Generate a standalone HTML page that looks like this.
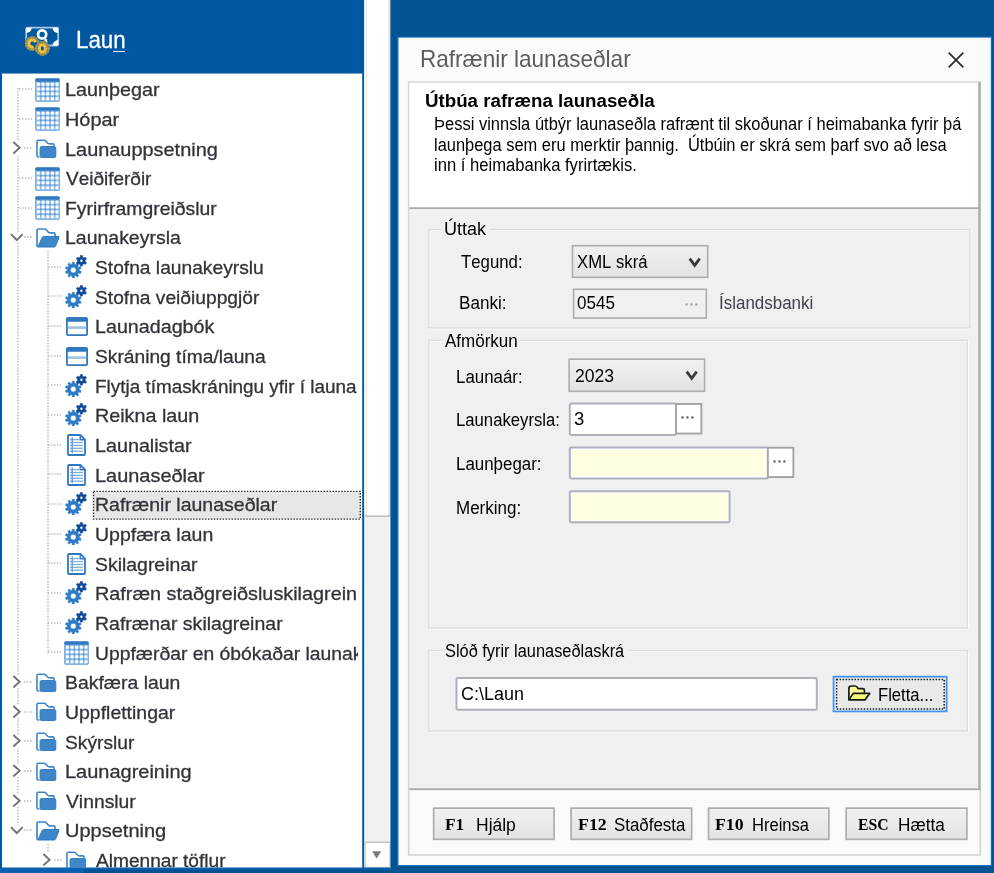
<!DOCTYPE html>
<html lang="is"><head><meta charset="utf-8"><title>Rafrænir launaseðlar</title>
<style>
html,body{margin:0;padding:0}
body{width:994px;height:873px;position:relative;overflow:hidden;background:#fff;font-family:"Liberation Sans",sans-serif;font-kerning:none}
div,span.t,svg.i{position:absolute}
span.t{white-space:pre;transform-origin:0 50%}
span.b{-webkit-text-stroke:0.3px currentColor}
span.t,svg.k{filter:blur(0.4px)}
</style></head>
<body>

<svg width="0" height="0" style="position:absolute">
<defs>
<symbol id="i-grid" viewBox="0 0 25 24">
 <rect x="0.4" y="0.4" width="24.2" height="23.2" rx="1.8" fill="#8dbae6" stroke="#6aa4dc" stroke-width="0.8"/>
 <rect x="0.4" y="0.4" width="24.2" height="3.3" rx="1.4" fill="#2f78bf"/>
 <g fill="#5793d3"><rect x="4.93" y="3.05" width="1.6" height="1.6"/><rect x="9.58" y="3.05" width="1.6" height="1.6"/><rect x="14.23" y="3.05" width="1.6" height="1.6"/><rect x="18.88" y="3.05" width="1.6" height="1.6"/><rect x="4.93" y="7.85" width="1.6" height="1.6"/><rect x="9.58" y="7.85" width="1.6" height="1.6"/><rect x="14.23" y="7.85" width="1.6" height="1.6"/><rect x="18.88" y="7.85" width="1.6" height="1.6"/><rect x="4.93" y="12.65" width="1.6" height="1.6"/><rect x="9.58" y="12.65" width="1.6" height="1.6"/><rect x="14.23" y="12.65" width="1.6" height="1.6"/><rect x="18.88" y="12.65" width="1.6" height="1.6"/><rect x="4.93" y="17.45" width="1.6" height="1.6"/><rect x="9.58" y="17.45" width="1.6" height="1.6"/><rect x="14.23" y="17.45" width="1.6" height="1.6"/><rect x="18.88" y="17.45" width="1.6" height="1.6"/></g>
 <g fill="#fff"><rect x="1.90" y="4.75" width="3" height="3" rx="0.7"/><rect x="6.55" y="4.75" width="3" height="3" rx="0.7"/><rect x="11.20" y="4.75" width="3" height="3" rx="0.7"/><rect x="15.85" y="4.75" width="3" height="3" rx="0.7"/><rect x="20.50" y="4.75" width="3" height="3" rx="0.7"/><rect x="1.90" y="9.55" width="3" height="3" rx="0.7"/><rect x="6.55" y="9.55" width="3" height="3" rx="0.7"/><rect x="11.20" y="9.55" width="3" height="3" rx="0.7"/><rect x="15.85" y="9.55" width="3" height="3" rx="0.7"/><rect x="20.50" y="9.55" width="3" height="3" rx="0.7"/><rect x="1.90" y="14.35" width="3" height="3" rx="0.7"/><rect x="6.55" y="14.35" width="3" height="3" rx="0.7"/><rect x="11.20" y="14.35" width="3" height="3" rx="0.7"/><rect x="15.85" y="14.35" width="3" height="3" rx="0.7"/><rect x="20.50" y="14.35" width="3" height="3" rx="0.7"/><rect x="1.90" y="19.15" width="3" height="3" rx="0.7"/><rect x="6.55" y="19.15" width="3" height="3" rx="0.7"/><rect x="11.20" y="19.15" width="3" height="3" rx="0.7"/><rect x="15.85" y="19.15" width="3" height="3" rx="0.7"/><rect x="20.50" y="19.15" width="3" height="3" rx="0.7"/></g>
</symbol>
<symbol id="i-folder" viewBox="0 0 22 20">
 <path d="M3.6 18.6 H2.4 Q1 18.6 1 17.2 V2.4 Q1 1 2.4 1 H8.6 Q9.6 1 10.3 1.8 L12.4 4.2 Q13 4.8 14 4.8 H17.8 Q19 4.8 19 6 V7.2" fill="none" stroke="#3d87cc" stroke-width="1.7" stroke-linejoin="round"/>
 <rect x="4.3" y="7.6" width="16.6" height="11.6" rx="1.6" fill="#3f86c8" stroke="#2d79c2" stroke-width="1"/>
</symbol>
<symbol id="i-ofolder" viewBox="0 0 24 20">
 <path d="M2.6 18.8 Q1 18.8 1 17.2 V2.4 Q1 1 2.4 1 H8.6 Q9.6 1 10.3 1.8 L12.4 4.2 Q13 4.8 14 4.8 H17.8 Q19 4.8 19 6 V8" fill="none" stroke="#3d87cc" stroke-width="1.7" stroke-linejoin="round"/>
 <path d="M7.6 8.4 H22 Q23.4 8.4 22.9 9.8 L19.6 18 Q19.2 19 18 19 H3 Q1.8 19 2.4 17.8 L6.2 9.4 Q6.6 8.4 7.6 8.4 Z" fill="#3f86c8" stroke="#2d79c2" stroke-width="1" stroke-linejoin="round"/>
</symbol>
<symbol id="i-win" viewBox="0 0 22 19">
 <rect x="0.9" y="0.9" width="20.2" height="17.2" rx="1.2" fill="#fff" stroke="#2f78bf" stroke-width="1.8"/>
 <rect x="0.9" y="0.9" width="20.2" height="3.8" rx="1" fill="#2f78bf"/>
 <rect x="1.8" y="9.3" width="18.4" height="2.6" fill="#9cc2e6"/>
</symbol>
<symbol id="i-doc" viewBox="0 0 19 22">
 <path d="M1 2 Q1 1 2 1 H13.4 L18 5.6 V20 Q18 21 17 21 H2 Q1 21 1 20 Z" fill="#fff" stroke="#2f78bf" stroke-width="1.8" stroke-linejoin="round"/>
 <path d="M13.2 1.4 V5.8 H17.6" fill="none" stroke="#2f78bf" stroke-width="1.4"/>
 <g stroke="#7eaedd" stroke-width="1.3">
  <path d="M3 5.6 H12"/><path d="M3 8.5 H16"/><path d="M3 11.4 H16"/><path d="M3 14.3 H16"/><path d="M3 17.2 H16"/>
 </g>
 <path d="M5.2 3.2 V19" stroke="#5b97d3" stroke-width="1.3"/>
</symbol>
<symbol id="i-gears" viewBox="0 0 24 24"><path fill-rule="evenodd" fill="#2d7bc6" stroke="#2d7bc6" stroke-width="0.6" stroke-linejoin="round" d="M8.18 10.21 L8.31 8.16 L10.29 8.16 L10.42 10.21 L11.85 10.67 L13.16 9.09 L14.77 10.26 L13.67 11.99 L14.56 13.21 L16.54 12.70 L17.16 14.59 L15.25 15.35 L15.25 16.85 L17.16 17.61 L16.54 19.50 L14.56 18.99 L13.67 20.21 L14.77 21.94 L13.16 23.11 L11.85 21.53 L10.42 21.99 L10.29 24.04 L8.31 24.04 L8.18 21.99 L6.75 21.53 L5.44 23.11 L3.83 21.94 L4.93 20.21 L4.04 18.99 L2.06 19.50 L1.44 17.61 L3.35 16.85 L3.35 15.35 L1.44 14.59 L2.06 12.70 L4.04 13.21 L4.93 11.99 L3.83 10.26 L5.44 9.09 L6.75 10.67 Z M12.20 16.10 A2.9 2.9 0 1 0 6.40 16.10 A2.9 2.9 0 1 0 12.20 16.10 Z"/><path fill-rule="evenodd" fill="#0d4a98" stroke="#0d4a98" stroke-width="0.6" stroke-linejoin="round" d="M16.19 3.20 L16.44 1.49 L18.36 1.49 L18.61 3.20 L19.91 3.95 L21.52 3.31 L22.48 4.97 L21.13 6.05 L21.13 7.55 L22.48 8.63 L21.52 10.29 L19.91 9.65 L18.61 10.40 L18.36 12.11 L16.44 12.11 L16.19 10.40 L14.89 9.65 L13.28 10.29 L12.32 8.63 L13.67 7.55 L13.67 6.05 L12.32 4.97 L13.28 3.31 L14.89 3.95 Z M18.90 6.80 A1.5 1.5 0 1 0 15.90 6.80 A1.5 1.5 0 1 0 18.90 6.80 Z"/></symbol>
<symbol id="i-chev-r" viewBox="0 0 10 14">
 <path d="M1.4 1 L8 7 L1.4 13" fill="none" stroke="#727272" stroke-width="2"/>
</symbol>
<symbol id="i-chev-d" viewBox="0 0 14 9">
 <path d="M1 1.2 L7 7.4 L13 1.2" fill="none" stroke="#727272" stroke-width="2"/>
</symbol>
</defs>
</svg>

<svg class="i" style="left:0;top:0" width="994" height="873" viewBox="0 0 994 873"><defs><linearGradient id="gb" x1="0" y1="0" x2="0" y2="1"><stop offset="0" stop-color="#f1f1f1"/><stop offset="1" stop-color="#e3e3e3"/></linearGradient></defs><rect x="0.00" y="0.00" width="364.50" height="73.60" fill="#0058a0"/><rect x="0.00" y="73.20" width="364.40" height="799.80" fill="#0058a0"/><rect x="2.00" y="73.60" width="360.20" height="794.10" fill="#fff"/><rect x="364.60" y="0.00" width="25.80" height="867.70" fill="#fff"/><rect x="365.60" y="516.00" width="23.70" height="326.20" fill="#f0f0f0"/><rect x="365.65" y="-2.25" width="23.90" height="518.50" fill="#fff" stroke="#bdbdbd" stroke-width="1.5" rx="1.8"/><rect x="364.40" y="-3.00" width="1.60" height="517.50" fill="#fff"/><rect x="389.40" y="-3.00" width="1.10" height="517.50" fill="#f3efec"/><rect x="365.45" y="842.25" width="24.30" height="25.10" fill="#fff" stroke="#d9d2cc" stroke-width="1.1"/><rect x="364.60" y="841.60" width="25.80" height="1.30" fill="#c4c4c4"/><rect x="364.40" y="867.70" width="26.00" height="5.30" fill="#0058a0"/><rect x="0.00" y="867.70" width="390.40" height="5.30" fill="#0a5fae"/><rect x="84.60" y="869.40" width="305.80" height="3.60" fill="#04518f"/><path d="M372.1 851.2 H381.2 L376.65 858.4 Z" fill="#7a7a7a"/><rect x="390.40" y="0.00" width="603.60" height="873.00" fill="#045494"/><rect x="397.30" y="36.60" width="594.50" height="829.40" fill="#2b7ed0" opacity="0.75"/><rect x="398.50" y="37.70" width="592.30" height="827.30" fill="#fbfbfb"/><rect x="408.75" y="82.05" width="571.50" height="772.90" fill="#fafafa" stroke="#d6d6d6" stroke-width="1.7"/><rect x="409.60" y="82.80" width="568.80" height="705.60" fill="#f0f0f0"/><rect x="409.60" y="82.80" width="568.80" height="124.50" fill="#fff"/><rect x="978.30" y="82.00" width="2.10" height="708.40" fill="#a9a9a9"/><rect x="409.40" y="207.30" width="569.60" height="2.10" fill="#a9a9a9"/><rect x="409.60" y="209.40" width="568.70" height="1.30" fill="#fbfbfb"/><rect x="409.40" y="788.30" width="571.00" height="2.10" fill="#a9a9a9"/><rect x="409.60" y="790.40" width="570.00" height="1.20" fill="#fff"/><rect x="429.80" y="230.60" width="541.40" height="98.40" fill="none" stroke="#fbfbfb" stroke-width="1.2"/><rect x="428.75" y="229.55" width="541.30" height="98.30" fill="none" stroke="#dcdcdc" stroke-width="1.3"/><rect x="429.80" y="341.30" width="538.70" height="287.90" fill="none" stroke="#fbfbfb" stroke-width="1.2"/><rect x="428.75" y="340.25" width="538.60" height="287.80" fill="none" stroke="#dcdcdc" stroke-width="1.3"/><rect x="429.80" y="651.60" width="538.70" height="80.60" fill="none" stroke="#fbfbfb" stroke-width="1.2"/><rect x="428.75" y="650.55" width="538.60" height="80.50" fill="none" stroke="#dcdcdc" stroke-width="1.3"/><rect x="572.50" y="245.70" width="135.20" height="31.60" fill="url(#gb)" stroke="#adadad" stroke-width="1.6"/><rect x="569.10" y="359.20" width="135.50" height="32.10" fill="url(#gb)" stroke="#adadad" stroke-width="1.6"/><rect x="573.60" y="289.30" width="132.70" height="28.70" fill="#f0f0f0" stroke="#adadad" stroke-width="1.6"/><rect x="569.80" y="403.60" width="106.20" height="31.30" fill="#fff" stroke="#aeb1bc" stroke-width="2.0" rx="1.4"/><rect x="675.95" y="403.95" width="25.40" height="29.60" fill="#fff" stroke="#a4a4a4" stroke-width="1.9"/><rect x="569.80" y="447.60" width="198.20" height="30.90" fill="#fff" stroke="#aeb1bc" stroke-width="2.0" rx="1.4"/><rect x="572.20" y="450.00" width="195.20" height="26.00" fill="#ffffe1"/><rect x="767.85" y="447.75" width="25.50" height="29.30" fill="#fff" stroke="#a4a4a4" stroke-width="1.9"/><rect x="569.80" y="491.30" width="159.80" height="30.90" fill="#fff" stroke="#aeb1bc" stroke-width="2.0" rx="1.4"/><rect x="572.20" y="493.80" width="155.00" height="26.00" fill="#ffffe1"/><rect x="456.50" y="678.10" width="360.30" height="31.70" fill="#fff" stroke="#aeb1bc" stroke-width="2.0" rx="1.4"/><rect x="833.55" y="676.65" width="113.10" height="34.80" fill="#e9e9e9" stroke="#3d93f3" stroke-width="1.7"/><rect x="433.65" y="808.15" width="120.40" height="31.20" fill="url(#gb)" stroke="#adadad" stroke-width="1.7"/><rect x="571.05" y="808.15" width="120.60" height="31.20" fill="url(#gb)" stroke="#adadad" stroke-width="1.7"/><rect x="708.55" y="808.15" width="120.30" height="31.20" fill="url(#gb)" stroke="#adadad" stroke-width="1.7"/><rect x="846.15" y="808.15" width="120.70" height="31.20" fill="url(#gb)" stroke="#adadad" stroke-width="1.7"/></svg>
<svg class="i" style="left:20px;top:22px" width="44" height="36" viewBox="20 22 44 36">
 <rect x="26.2" y="27.7" width="32" height="17.8" rx="1.2" fill="none" stroke="#a4c6e6" stroke-width="1.8"/>
 <path d="M26.2 27.7 h5.6 a5.6 5.6 0 0 1 -5.6 5.2 Z" fill="#fff"/>
 <path d="M58.2 27.7 h-5.8 a5.8 5.8 0 0 0 5.8 5.4 Z" fill="#fff"/>
 <path d="M58.2 45.5 h-5.8 a5.8 5.8 0 0 1 5.8 -5.4 Z" fill="#fff"/>
 <circle cx="42.1" cy="34.4" r="4.1" fill="none" stroke="#fff" stroke-width="2.7"/>
 <path d="M44.6 37.6 Q47.2 38.6 47.6 42.4 L44.4 41 Z" fill="#fff"/>
 <circle cx="32.3" cy="43.6" r="7.4" fill="#0058a0"/>
 <circle cx="32.3" cy="43.6" r="6.1" fill="none" stroke="#7f8b68" stroke-width="2.5"/>
 <circle cx="32.3" cy="43.6" r="6.1" fill="none" stroke="#a99c4c" stroke-width="2.5" stroke-dasharray="1.4 1.2"/>
 <circle cx="32.3" cy="43.6" r="3.5" fill="none" stroke="#fdbf35" stroke-width="3" stroke-dasharray="16 6" stroke-dashoffset="-4"/>
 <circle cx="42.4" cy="48.4" r="7.4" fill="#0058a0"/>
 <circle cx="42.4" cy="48.4" r="6.1" fill="none" stroke="#7f8b68" stroke-width="2.5"/>
 <circle cx="42.4" cy="48.4" r="6.1" fill="none" stroke="#a99c4c" stroke-width="2.5" stroke-dasharray="1.4 1.2"/>
 <ellipse cx="42.4" cy="48.4" rx="3" ry="3.7" fill="none" stroke="#fdbf35" stroke-width="3"/>
</svg>
<span class="t b" style="left:76.16px;top:26.30px;font-size:24.3px;line-height:27px;color:#fff;transform:scaleX(0.9182);">Laun</span>
<div style="left:112.80px;top:50.70px;width:12.20px;height:1.60px;background:#e8f0f8"></div>
<div style="left:2px;top:73.7px;width:360.3px;height:794px;overflow:hidden"><div style="left:-2px;top:-73.7px;width:400px;height:900px">
<svg class="i" style="left:17.00px;top:88.00px" width="2" height="738.75"><path d="M1 0 V738.75" stroke="#bcbcbc" stroke-width="1.5" stroke-dasharray="1.5 1.47" fill="none"/></svg>
<svg class="i" style="left:46.60px;top:250.75px" width="2" height="402.60"><path d="M1 0 V402.60" stroke="#bcbcbc" stroke-width="1.5" stroke-dasharray="1.5 1.47" fill="none"/></svg>
<svg class="i" style="left:46.60px;top:843.75px" width="2" height="26.25"><path d="M1 0 V26.25" stroke="#bcbcbc" stroke-width="1.5" stroke-dasharray="1.5 1.47" fill="none"/></svg>
<svg class="i" style="left:18.80px;top:87.90px" width="13.40" height="2"><path d="M0 1 H13.40" stroke="#bcbcbc" stroke-width="1.5" stroke-dasharray="1.5 1.47" fill="none"/></svg>
<svg class="i k" style="left:34.50px;top:77.70px" width="25" height="24"><use href="#i-grid"/></svg>
<span class="t b" style="left:64.74px;top:79.20px;font-size:19.0px;line-height:21px;color:#35313a;transform:scaleX(1.0422);">Launþegar</span>
<svg class="i" style="left:18.80px;top:117.55px" width="13.40" height="2"><path d="M0 1 H13.40" stroke="#bcbcbc" stroke-width="1.5" stroke-dasharray="1.5 1.47" fill="none"/></svg>
<svg class="i k" style="left:34.50px;top:107.35px" width="25" height="24"><use href="#i-grid"/></svg>
<span class="t b" style="left:64.73px;top:108.85px;font-size:19.0px;line-height:21px;color:#35313a;transform:scaleX(1.0455);">Hópar</span>
<svg class="i" style="left:23.50px;top:147.20px" width="8.70" height="2"><path d="M0 1 H8.70" stroke="#bcbcbc" stroke-width="1.5" stroke-dasharray="1.5 1.47" fill="none"/></svg>
<div style="left:9.50px;top:141.60px;width:13.90px;height:13.20px;background:#fff"></div>
<svg class="i k" style="left:12.40px;top:141.20px" width="9.6" height="13.4"><use href="#i-chev-r"/></svg>
<svg class="i k" style="left:35.70px;top:139.10px" width="20.9" height="19.6"><use href="#i-folder"/></svg>
<span class="t b" style="left:64.73px;top:138.50px;font-size:19.0px;line-height:21px;color:#35313a;transform:scaleX(1.0480);">Launauppsetning</span>
<svg class="i" style="left:18.80px;top:176.85px" width="13.40" height="2"><path d="M0 1 H13.40" stroke="#bcbcbc" stroke-width="1.5" stroke-dasharray="1.5 1.47" fill="none"/></svg>
<svg class="i k" style="left:34.50px;top:166.65px" width="25" height="24"><use href="#i-grid"/></svg>
<span class="t b" style="left:66.30px;top:168.15px;font-size:19.0px;line-height:21px;color:#35313a;transform:scaleX(0.9987);">Veiðiferðir</span>
<svg class="i" style="left:18.80px;top:206.50px" width="13.40" height="2"><path d="M0 1 H13.40" stroke="#bcbcbc" stroke-width="1.5" stroke-dasharray="1.5 1.47" fill="none"/></svg>
<svg class="i k" style="left:34.50px;top:196.30px" width="25" height="24"><use href="#i-grid"/></svg>
<span class="t b" style="left:64.77px;top:197.80px;font-size:19.0px;line-height:21px;color:#35313a;transform:scaleX(1.0196);">Fyrirframgreiðslur</span>
<svg class="i" style="left:23.50px;top:236.15px" width="8.70" height="2"><path d="M0 1 H8.70" stroke="#bcbcbc" stroke-width="1.5" stroke-dasharray="1.5 1.47" fill="none"/></svg>
<div style="left:9.50px;top:232.35px;width:13.90px;height:9.80px;background:#fff"></div>
<svg class="i k" style="left:10.40px;top:233.15px" width="13.6" height="8.7"><use href="#i-chev-d"/></svg>
<svg class="i k" style="left:35.70px;top:227.75px" width="24" height="20"><use href="#i-ofolder"/></svg>
<span class="t b" style="left:64.76px;top:227.45px;font-size:19.0px;line-height:21px;color:#35313a;transform:scaleX(1.0247);">Launakeyrsla</span>
<svg class="i" style="left:48.40px;top:265.80px" width="13.10" height="2"><path d="M0 1 H13.10" stroke="#bcbcbc" stroke-width="1.5" stroke-dasharray="1.5 1.47" fill="none"/></svg>
<svg class="i k" style="left:64.00px;top:254.20px" width="24" height="24"><use href="#i-gears"/></svg>
<span class="t b" style="left:95.29px;top:257.10px;font-size:19.0px;line-height:21px;color:#35313a;transform:scaleX(1.0108);">Stofna launakeyrslu</span>
<svg class="i" style="left:48.40px;top:295.45px" width="13.10" height="2"><path d="M0 1 H13.10" stroke="#bcbcbc" stroke-width="1.5" stroke-dasharray="1.5 1.47" fill="none"/></svg>
<svg class="i k" style="left:64.00px;top:283.85px" width="24" height="24"><use href="#i-gears"/></svg>
<span class="t b" style="left:95.29px;top:286.75px;font-size:19.0px;line-height:21px;color:#35313a;transform:scaleX(1.0103);">Stofna veiðiuppgjör</span>
<svg class="i" style="left:48.40px;top:325.10px" width="13.10" height="2"><path d="M0 1 H13.10" stroke="#bcbcbc" stroke-width="1.5" stroke-dasharray="1.5 1.47" fill="none"/></svg>
<svg class="i k" style="left:65.60px;top:317.10px" width="22" height="19"><use href="#i-win"/></svg>
<span class="t b" style="left:94.55px;top:316.40px;font-size:19.0px;line-height:21px;color:#35313a;transform:scaleX(1.0363);">Launadagbók</span>
<svg class="i" style="left:48.40px;top:354.75px" width="13.10" height="2"><path d="M0 1 H13.10" stroke="#bcbcbc" stroke-width="1.5" stroke-dasharray="1.5 1.47" fill="none"/></svg>
<svg class="i k" style="left:65.60px;top:346.75px" width="22" height="19"><use href="#i-win"/></svg>
<span class="t b" style="left:95.29px;top:346.05px;font-size:19.0px;line-height:21px;color:#35313a;transform:scaleX(1.0100);">Skráning tíma/launa</span>
<svg class="i" style="left:48.40px;top:384.40px" width="13.10" height="2"><path d="M0 1 H13.10" stroke="#bcbcbc" stroke-width="1.5" stroke-dasharray="1.5 1.47" fill="none"/></svg>
<svg class="i k" style="left:64.00px;top:372.80px" width="24" height="24"><use href="#i-gears"/></svg>
<span class="t b" style="left:94.61px;top:375.70px;font-size:19.0px;line-height:21px;color:#35313a;transform:scaleX(0.9948);">Flytja tímaskráningu yfir í launa</span>
<svg class="i" style="left:48.40px;top:414.05px" width="13.10" height="2"><path d="M0 1 H13.10" stroke="#bcbcbc" stroke-width="1.5" stroke-dasharray="1.5 1.47" fill="none"/></svg>
<svg class="i k" style="left:64.00px;top:402.45px" width="24" height="24"><use href="#i-gears"/></svg>
<span class="t b" style="left:94.54px;top:405.35px;font-size:19.0px;line-height:21px;color:#35313a;transform:scaleX(1.0391);">Reikna laun</span>
<svg class="i" style="left:48.40px;top:443.70px" width="13.10" height="2"><path d="M0 1 H13.10" stroke="#bcbcbc" stroke-width="1.5" stroke-dasharray="1.5 1.47" fill="none"/></svg>
<svg class="i k" style="left:67.20px;top:434.10px" width="19" height="22"><use href="#i-doc"/></svg>
<span class="t b" style="left:94.54px;top:435.00px;font-size:19.0px;line-height:21px;color:#35313a;transform:scaleX(1.0381);">Launalistar</span>
<svg class="i" style="left:48.40px;top:473.35px" width="13.10" height="2"><path d="M0 1 H13.10" stroke="#bcbcbc" stroke-width="1.5" stroke-dasharray="1.5 1.47" fill="none"/></svg>
<svg class="i k" style="left:67.20px;top:463.75px" width="19" height="22"><use href="#i-doc"/></svg>
<span class="t b" style="left:94.53px;top:464.65px;font-size:19.0px;line-height:21px;color:#35313a;transform:scaleX(1.0490);">Launaseðlar</span>
<svg class="i" style="left:48.40px;top:503.00px" width="13.10" height="2"><path d="M0 1 H13.10" stroke="#bcbcbc" stroke-width="1.5" stroke-dasharray="1.5 1.47" fill="none"/></svg>
<svg class="i k" style="left:64.00px;top:491.40px" width="24" height="24"><use href="#i-gears"/></svg>
<svg class="i" style="left:92px;top:489.60px" width="270" height="31"><rect x="1.5" y="1.40" width="266.80" height="27.70" fill="#e6e6e6" stroke="#262626" stroke-width="1.4" stroke-dasharray="1.45 1.5"/></svg>
<span class="t b" style="left:94.56px;top:494.30px;font-size:19.0px;line-height:21px;color:#35313a;transform:scaleX(1.0268);">Rafrænir launaseðlar</span>
<svg class="i" style="left:48.40px;top:532.65px" width="13.10" height="2"><path d="M0 1 H13.10" stroke="#bcbcbc" stroke-width="1.5" stroke-dasharray="1.5 1.47" fill="none"/></svg>
<svg class="i k" style="left:64.00px;top:521.05px" width="24" height="24"><use href="#i-gears"/></svg>
<span class="t b" style="left:94.66px;top:523.95px;font-size:19.0px;line-height:21px;color:#35313a;transform:scaleX(1.0270);">Uppfæra laun</span>
<svg class="i" style="left:48.40px;top:562.30px" width="13.10" height="2"><path d="M0 1 H13.10" stroke="#bcbcbc" stroke-width="1.5" stroke-dasharray="1.5 1.47" fill="none"/></svg>
<svg class="i k" style="left:67.20px;top:552.70px" width="19" height="22"><use href="#i-doc"/></svg>
<span class="t b" style="left:95.28px;top:553.60px;font-size:19.0px;line-height:21px;color:#35313a;transform:scaleX(1.0222);">Skilagreinar</span>
<svg class="i" style="left:48.40px;top:591.95px" width="13.10" height="2"><path d="M0 1 H13.10" stroke="#bcbcbc" stroke-width="1.5" stroke-dasharray="1.5 1.47" fill="none"/></svg>
<svg class="i k" style="left:64.00px;top:580.35px" width="24" height="24"><use href="#i-gears"/></svg>
<span class="t b" style="left:94.54px;top:583.25px;font-size:19.0px;line-height:21px;color:#35313a;transform:scaleX(1.0427);">Rafræn staðgreiðsluskilagrein</span>
<svg class="i" style="left:48.40px;top:621.60px" width="13.10" height="2"><path d="M0 1 H13.10" stroke="#bcbcbc" stroke-width="1.5" stroke-dasharray="1.5 1.47" fill="none"/></svg>
<svg class="i k" style="left:64.00px;top:610.00px" width="24" height="24"><use href="#i-gears"/></svg>
<span class="t b" style="left:94.56px;top:612.90px;font-size:19.0px;line-height:21px;color:#35313a;transform:scaleX(1.0273);">Rafrænar skilagreinar</span>
<svg class="i" style="left:48.40px;top:651.25px" width="13.10" height="2"><path d="M0 1 H13.10" stroke="#bcbcbc" stroke-width="1.5" stroke-dasharray="1.5 1.47" fill="none"/></svg>
<svg class="i k" style="left:64.30px;top:641.05px" width="25" height="24"><use href="#i-grid"/></svg>
<div style="left:90px;top:0;width:268px;height:900px;overflow:hidden"><div style="left:-90px;top:0;width:500px;height:900px">
<span class="t b" style="left:94.68px;top:642.55px;font-size:19.0px;line-height:21px;color:#35313a;transform:scaleX(1.0165);">Uppfærðar en óbókaðar launak</span>
</div></div>
<svg class="i" style="left:23.50px;top:680.90px" width="8.70" height="2"><path d="M0 1 H8.70" stroke="#bcbcbc" stroke-width="1.5" stroke-dasharray="1.5 1.47" fill="none"/></svg>
<div style="left:9.50px;top:675.30px;width:13.90px;height:13.20px;background:#fff"></div>
<svg class="i k" style="left:12.40px;top:674.90px" width="9.6" height="13.4"><use href="#i-chev-r"/></svg>
<svg class="i k" style="left:35.70px;top:672.80px" width="20.9" height="19.6"><use href="#i-folder"/></svg>
<span class="t b" style="left:64.77px;top:672.20px;font-size:19.0px;line-height:21px;color:#35313a;transform:scaleX(1.0205);">Bakfæra laun</span>
<svg class="i" style="left:23.50px;top:710.55px" width="8.70" height="2"><path d="M0 1 H8.70" stroke="#bcbcbc" stroke-width="1.5" stroke-dasharray="1.5 1.47" fill="none"/></svg>
<div style="left:9.50px;top:704.95px;width:13.90px;height:13.20px;background:#fff"></div>
<svg class="i k" style="left:12.40px;top:704.55px" width="9.6" height="13.4"><use href="#i-chev-r"/></svg>
<svg class="i k" style="left:35.70px;top:702.45px" width="20.9" height="19.6"><use href="#i-folder"/></svg>
<span class="t b" style="left:64.87px;top:701.85px;font-size:19.0px;line-height:21px;color:#35313a;transform:scaleX(1.0235);">Uppflettingar</span>
<svg class="i" style="left:23.50px;top:740.20px" width="8.70" height="2"><path d="M0 1 H8.70" stroke="#bcbcbc" stroke-width="1.5" stroke-dasharray="1.5 1.47" fill="none"/></svg>
<div style="left:9.50px;top:734.60px;width:13.90px;height:13.20px;background:#fff"></div>
<svg class="i k" style="left:12.40px;top:734.20px" width="9.6" height="13.4"><use href="#i-chev-r"/></svg>
<svg class="i k" style="left:35.70px;top:732.10px" width="20.9" height="19.6"><use href="#i-folder"/></svg>
<span class="t b" style="left:65.49px;top:731.50px;font-size:19.0px;line-height:21px;color:#35313a;transform:scaleX(1.0105);">Skýrslur</span>
<svg class="i" style="left:23.50px;top:769.85px" width="8.70" height="2"><path d="M0 1 H8.70" stroke="#bcbcbc" stroke-width="1.5" stroke-dasharray="1.5 1.47" fill="none"/></svg>
<div style="left:9.50px;top:764.25px;width:13.90px;height:13.20px;background:#fff"></div>
<svg class="i k" style="left:12.40px;top:763.85px" width="9.6" height="13.4"><use href="#i-chev-r"/></svg>
<svg class="i k" style="left:35.70px;top:761.75px" width="20.9" height="19.6"><use href="#i-folder"/></svg>
<span class="t b" style="left:64.72px;top:761.15px;font-size:19.0px;line-height:21px;color:#35313a;transform:scaleX(1.0512);">Launagreining</span>
<svg class="i" style="left:23.50px;top:799.50px" width="8.70" height="2"><path d="M0 1 H8.70" stroke="#bcbcbc" stroke-width="1.5" stroke-dasharray="1.5 1.47" fill="none"/></svg>
<div style="left:9.50px;top:793.90px;width:13.90px;height:13.20px;background:#fff"></div>
<svg class="i k" style="left:12.40px;top:793.50px" width="9.6" height="13.4"><use href="#i-chev-r"/></svg>
<svg class="i k" style="left:35.70px;top:791.40px" width="20.9" height="19.6"><use href="#i-folder"/></svg>
<span class="t b" style="left:66.30px;top:790.80px;font-size:19.0px;line-height:21px;color:#35313a;transform:scaleX(1.0158);">Vinnslur</span>
<svg class="i" style="left:23.50px;top:829.15px" width="8.70" height="2"><path d="M0 1 H8.70" stroke="#bcbcbc" stroke-width="1.5" stroke-dasharray="1.5 1.47" fill="none"/></svg>
<div style="left:9.50px;top:825.35px;width:13.90px;height:9.80px;background:#fff"></div>
<svg class="i k" style="left:10.40px;top:826.15px" width="13.6" height="8.7"><use href="#i-chev-d"/></svg>
<svg class="i k" style="left:35.70px;top:820.75px" width="24" height="20"><use href="#i-ofolder"/></svg>
<span class="t b" style="left:64.83px;top:820.45px;font-size:19.0px;line-height:21px;color:#35313a;transform:scaleX(1.0528);">Uppsetning</span>
<svg class="i" style="left:53.50px;top:858.80px" width="8.00" height="2"><path d="M0 1 H8.00" stroke="#bcbcbc" stroke-width="1.5" stroke-dasharray="1.5 1.47" fill="none"/></svg>
<div style="left:39.30px;top:853.20px;width:13.90px;height:13.20px;background:#fff"></div>
<svg class="i k" style="left:42.20px;top:852.80px" width="9.6" height="13.4"><use href="#i-chev-r"/></svg>
<svg class="i k" style="left:65.50px;top:850.70px" width="20.9" height="19.6"><use href="#i-folder"/></svg>
<span class="t b" style="left:96.10px;top:850.10px;font-size:19.0px;line-height:21px;color:#35313a;transform:scaleX(1.0054);">Almennar töflur</span>
</div></div>
<span class="t" style="left:419.81px;top:44.80px;font-size:24.0px;line-height:27px;color:#5c5c5c;transform:scaleX(0.9400);">Rafrænir launaseðlar</span>
<svg class="i k" style="left:947.3px;top:50.9px" width="18" height="18"><path d="M1.7 1.7 L16.3 16.3 M16.3 1.7 L1.7 16.3" stroke="#2b2b2b" stroke-width="1.7" fill="none"/></svg>
<span class="t" style="left:425.38px;top:90.20px;font-size:18.3px;line-height:21px;color:#000;font-weight:700;transform:scaleX(1.0234);">Útbúa rafræna launaseðla</span>
<span class="t" style="left:434.05px;top:113.40px;font-size:18.3px;line-height:21px;color:#000;transform:scaleX(0.9026);">Þessi vinnsla útbýr launaseðla rafrænt til skoðunar í heimabanka fyrir þá</span>
<span class="t" style="left:434.32px;top:133.60px;font-size:18.3px;line-height:21px;color:#000;transform:scaleX(0.8991);">launþega sem eru merktir þannig.  Útbúin er skrá sem þarf svo að lesa</span>
<span class="t" style="left:434.31px;top:153.60px;font-size:18.3px;line-height:21px;color:#000;transform:scaleX(0.9078);">inn í heimabanka fyrirtækis.</span>
<div style="left:442.20px;top:226.90px;width:47.80px;height:5.50px;background:#f0f0f0"></div>
<span class="t" style="left:444.32px;top:218.40px;font-size:18.3px;line-height:21px;color:#000;transform:scaleX(0.9864);">Úttak</span>
<div style="left:441.50px;top:337.60px;width:78.70px;height:5.50px;background:#f0f0f0"></div>
<span class="t" style="left:445.00px;top:329.80px;font-size:18.3px;line-height:21px;color:#000;transform:scaleX(0.9296);">Afmörkun</span>
<div style="left:442.20px;top:647.90px;width:185.70px;height:5.50px;background:#f0f0f0"></div>
<span class="t" style="left:444.98px;top:640.00px;font-size:18.3px;line-height:21px;color:#000;transform:scaleX(0.8953);">Slóð fyrir launaseðlaskrá</span>
<span class="t" style="left:460.73px;top:251.00px;font-size:18.3px;line-height:21px;color:#000;transform:scaleX(0.9177);">Tegund:</span>
<span class="t" style="left:459.40px;top:292.10px;font-size:18.3px;line-height:21px;color:#000;transform:scaleX(0.9356);">Banki:</span>
<span class="t" style="left:455.82px;top:365.50px;font-size:18.3px;line-height:21px;color:#000;transform:scaleX(0.9225);">Launaár:</span>
<span class="t" style="left:455.83px;top:409.20px;font-size:18.3px;line-height:21px;color:#000;transform:scaleX(0.9129);">Launakeyrsla:</span>
<span class="t" style="left:455.81px;top:453.30px;font-size:18.3px;line-height:21px;color:#000;transform:scaleX(0.9250);">Launþegar:</span>
<span class="t" style="left:455.81px;top:496.70px;font-size:18.3px;line-height:21px;color:#000;transform:scaleX(0.9287);">Merking:</span>
<svg class="i" style="left:687.80px;top:256.60px" width="14" height="12"><path d="M1.7 1.6 L6.7 8.4 L11.7 1.6" fill="none" stroke="#3c3c3c" stroke-width="2.8"/></svg>
<span class="t" style="left:577.33px;top:251.20px;font-size:18.3px;line-height:21px;color:#000;transform:scaleX(0.9141);">XML skrá</span>
<span class="t" style="left:577.45px;top:291.80px;font-size:18.3px;line-height:21px;color:#000;transform:scaleX(0.9305);">0545</span>
<svg class="i" style="left:685.20px;top:302.50px" width="14" height="3"><g fill="#9c9c9c"><rect x="0.5" y="0.4" width="2.1" height="2.1"/><rect x="5.4" y="0.4" width="2.1" height="2.1"/><rect x="10.3" y="0.4" width="2.1" height="2.1"/></g></svg>
<span class="t" style="left:718.69px;top:291.80px;font-size:18.3px;line-height:21px;color:#43404e;transform:scaleX(0.9279);">Íslandsbanki</span>
<svg class="i" style="left:684.70px;top:370.20px" width="14" height="12"><path d="M1.7 1.6 L6.7 8.4 L11.7 1.6" fill="none" stroke="#3c3c3c" stroke-width="2.8"/></svg>
<span class="t" style="left:575.24px;top:365.20px;font-size:18.3px;line-height:21px;color:#000;transform:scaleX(0.9607);">2023</span>
<span class="t" style="left:573.99px;top:407.70px;font-size:18.3px;line-height:21px;color:#000;transform:scaleX(1.0114);">3</span>
<svg class="i" style="left:680.80px;top:416.30px" width="14" height="3"><g fill="#555"><rect x="0.5" y="0.4" width="2.1" height="2.1"/><rect x="5.4" y="0.4" width="2.1" height="2.1"/><rect x="10.3" y="0.4" width="2.1" height="2.1"/></g></svg>
<svg class="i" style="left:773.20px;top:460.00px" width="14" height="3"><g fill="#555"><rect x="0.5" y="0.4" width="2.1" height="2.1"/><rect x="5.4" y="0.4" width="2.1" height="2.1"/><rect x="10.3" y="0.4" width="2.1" height="2.1"/></g></svg>
<span class="t" style="left:461.11px;top:682.50px;font-size:18.3px;line-height:21px;color:#000;transform:scaleX(0.9836);">C:\Laun</span>
<svg class="i" style="left:835px;top:678px" width="111" height="33"><rect x="1.6" y="1.6" width="107.6" height="29.4" fill="none" stroke="#1c1c1c" stroke-width="1.5" stroke-dasharray="1.5 1.5"/></svg>
<svg class="i" style="left:847.4px;top:684.4px" width="24" height="18" viewBox="0 0 24 18">
 <path d="M1.9 15.9 V4.4 Q1.9 2 4.3 2 H8 Q9.4 2 10.2 3.2 L11 4.6 H15.8 Q17.4 4.6 17.4 6.2 V9" fill="#ffff9a" stroke="#1a1a1a" stroke-width="1.7" stroke-linejoin="round"/>
 <path d="M1.9 15.9 L6.2 9.4 H22.6 L18 15.9 Z" fill="#f6f678" stroke="#1a1a1a" stroke-width="1.7" stroke-linejoin="round"/>
</svg>
<span class="t" style="left:878.14px;top:684.00px;font-size:18.3px;line-height:21px;color:#000;transform:scaleX(0.9096);">Fletta...</span>
<span class="t" style="left:444.60px;top:814.40px;font-size:17.4px;line-height:20px;color:#000;font-weight:700;font-family:'Liberation Serif', serif;transform:scaleX(0.9984);">F1</span>
<span class="t" style="left:475.57px;top:813.80px;font-size:18.3px;line-height:21px;color:#000;transform:scaleX(0.9564);">Hjálp</span>
<span class="t" style="left:578.30px;top:814.40px;font-size:17.4px;line-height:20px;color:#000;font-weight:700;font-family:'Liberation Serif', serif;transform:scaleX(1.0247);">F12</span>
<span class="t" style="left:613.96px;top:813.80px;font-size:18.3px;line-height:21px;color:#000;transform:scaleX(0.9237);">Staðfesta</span>
<span class="t" style="left:714.90px;top:814.40px;font-size:17.4px;line-height:20px;color:#000;font-weight:700;font-family:'Liberation Serif', serif;transform:scaleX(1.0210);">F10</span>
<span class="t" style="left:751.54px;top:813.80px;font-size:18.3px;line-height:21px;color:#000;transform:scaleX(0.9061);">Hreinsa</span>
<span class="t" style="left:857.72px;top:814.40px;font-size:17.4px;line-height:20px;color:#000;font-weight:700;font-family:'Liberation Serif', serif;transform:scaleX(0.9048);">ESC</span>
<span class="t" style="left:898.49px;top:813.80px;font-size:18.3px;line-height:21px;color:#000;transform:scaleX(0.9409);">Hætta</span>
</body></html>
